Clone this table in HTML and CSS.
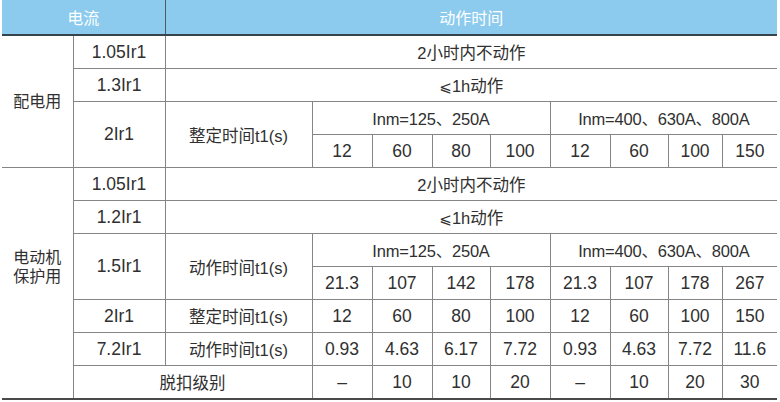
FILE: index.html
```html
<!DOCTYPE html>
<html lang="zh-CN">
<head>
<meta charset="utf-8">
<title>动作时间</title>
<link rel="stylesheet" href="styles.css">
</head>
<body>
<table class="spec">
  <colgroup>
    <col class="c1"><col class="c2"><col class="c3">
    <col class="c4"><col class="c5"><col class="c6"><col class="c7">
    <col class="c8"><col class="c9"><col class="c10"><col class="c11">
  </colgroup>
  <thead>
    <tr class="head">
      <th colspan="2" class="h-left">电流</th>
      <th colspan="9">动作时间</th>
    </tr>
  </thead>
  <tbody>
    <tr>
      <td rowspan="4" class="group">配电用</td>
      <td>1.05Ir1</td>
      <td colspan="9" class="cn">2小时内不动作</td>
    </tr>
    <tr>
      <td>1.3Ir1</td>
      <td colspan="9" class="cn"><span class="le">⩽</span>1h动作</td>
    </tr>
    <tr>
      <td rowspan="2">2Ir1</td>
      <td rowspan="2" class="cn">整定时间t1(s)</td>
      <td colspan="4" class="inm">Inm=125、250A</td>
      <td colspan="4" class="inm">Inm=400、630A、800A</td>
    </tr>
    <tr>
      <td>12</td><td>60</td><td>80</td><td>100</td>
      <td>12</td><td>60</td><td>100</td><td>150</td>
    </tr>
    <tr>
      <td rowspan="6" class="group group-b">电动机<br>保护用</td>
      <td>1.05Ir1</td>
      <td colspan="9" class="cn">2小时内不动作</td>
    </tr>
    <tr>
      <td>1.2Ir1</td>
      <td colspan="9" class="cn"><span class="le">⩽</span>1h动作</td>
    </tr>
    <tr>
      <td rowspan="2">1.5Ir1</td>
      <td rowspan="2" class="cn">动作时间t1(s)</td>
      <td colspan="4" class="inm">Inm=125、250A</td>
      <td colspan="4" class="inm">Inm=400、630A、800A</td>
    </tr>
    <tr>
      <td>21.3</td><td>107</td><td>142</td><td>178</td>
      <td>21.3</td><td>107</td><td>178</td><td>267</td>
    </tr>
    <tr>
      <td>2Ir1</td>
      <td class="cn">整定时间t1(s)</td>
      <td>12</td><td>60</td><td>80</td><td>100</td>
      <td>12</td><td>60</td><td>100</td><td>150</td>
    </tr>
    <tr>
      <td>7.2Ir1</td>
      <td class="cn">动作时间t1(s)</td>
      <td>0.93</td><td>4.63</td><td>6.17</td><td>7.72</td>
      <td>0.93</td><td>4.63</td><td>7.72</td><td>11.6</td>
    </tr>
    <tr class="last">
      <td class="blank"></td>
      <td colspan="2" class="cn">脱扣级别</td>
      <td>–</td><td>10</td><td>10</td><td>20</td>
      <td>–</td><td>10</td><td>20</td><td>30</td>
    </tr>
  </tbody>
</table>
</body>
</html>
```
FILE: styles.css
```css
html, body {
  margin: 0;
  padding: 0;
  background: #ffffff;
}

.spec {
  margin: 0 0 0 2px;
  width: 775px;
  border-collapse: collapse;
  table-layout: fixed;
  font-family: "Liberation Sans", "Noto Sans CJK SC", sans-serif;
  font-size: 17.5px;
  color: #303030;
}

.c1 { width: 71px; }
.c2 { width: 92px; }
.c3 { width: 147px; }
.c4 { width: 60px; }
.c5 { width: 60px; }
.c6 { width: 58px; }
.c7 { width: 60px; }
.c8 { width: 60px; }
.c9 { width: 58px; }
.c10 { width: 54px; }
.c11 { width: 55px; }

.head th {
  height: 34px;
  padding: 0;
  background: #8ccbee;
  color: #ffffff;
  font-weight: normal;
  font-size: 16px;
  text-align: center;
  border-bottom: 2px solid #34434c;
}

.head .h-left {
  border-right: 1px solid #4f5a60;
}

.spec td {
  height: 32px;
  padding: 0;
  text-align: center;
  vertical-align: middle;
  border: 1px solid #858585;
  white-space: nowrap;
}

.spec td.cn {
  font-size: 16.5px;
}

.spec td.inm {
  font-size: 16.5px;
  letter-spacing: -0.2px;
}

.spec tr > td:first-child.group,
.spec tr > td:first-child.blank {
  border-left: none;
}

.spec td:last-child {
  border-right: none;
}

.spec td.group {
  font-size: 16px;
  line-height: 19px;
}

.spec td.group-b {
  border-bottom: hidden;
}

.spec .blank {
  border-top: hidden;
  border-left: none;
}

.last td {
  border-bottom: 2px solid #4a4a4a;
}

.le {
  font-family: "DejaVu Sans", sans-serif;
  font-size: 15px;
}
```
